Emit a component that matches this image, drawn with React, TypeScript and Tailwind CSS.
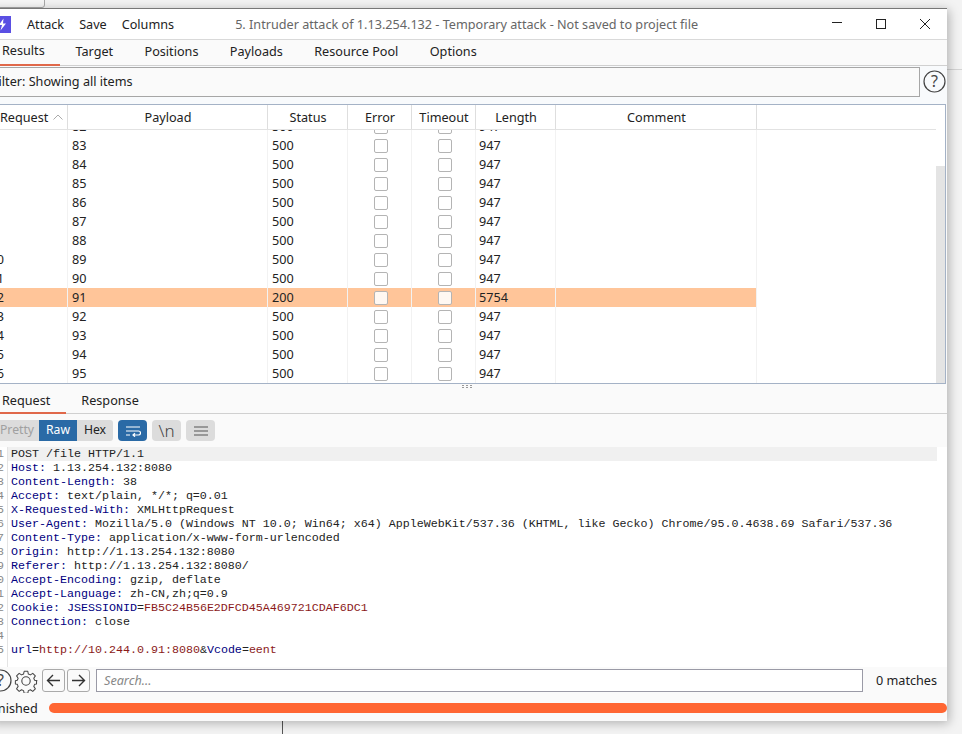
import React from "react";

const sans = { fontFamily: '"Noto Sans", "Open Sans", sans-serif' };
const rows = [82, 83, 84, 85, 86, 87, 88, 89, 90, 91, 92, 93, 94, 95];
const cols = [
  { label: "Payload", w: "w-[200px]" },
  { label: "Status", w: "w-[80px]" },
  { label: "Error", w: "w-[64px]" },
  { label: "Timeout", w: "w-[64px]" },
  { label: "Length", w: "w-[80px]" },
  { label: "Comment", w: "w-[201px]" },
];

function Box({ hit }: { hit: boolean }) {
  return <div className={`w-[14px] h-[14px] rounded-[2px] border border-[#b4b4b4] ${hit ? "bg-[#fff8f2]" : "bg-white"}`} />;
}

function Row({ n }: { n: number }) {
  const hit = n === 91;
  const req = n >= 89 ? String(n + 1) : "";
  return (
    <div className={`flex h-[19px] w-[768px] items-center text-[12.65px] text-[#222] ${hit ? "bg-[#ffc599]" : ""}`}>
      <div className="w-[79px] h-full flex items-center justify-end border-r border-[#f2f2f2] pr-[63px] shrink-0">{req}</div>
      <div className="w-[200px] h-full flex items-center pl-[4px] border-r border-[#f2f2f2] shrink-0">{n}</div>
      <div className="w-[80px] h-full flex items-center pl-[4px] border-r border-[#f2f2f2] shrink-0">{hit ? 200 : 500}</div>
      <div className="w-[64px] h-full flex items-center justify-center pl-[2px] border-r border-[#f2f2f2] shrink-0"><Box hit={hit} /></div>
      <div className="w-[64px] h-full flex items-center justify-center pl-[2px] border-r border-[#f2f2f2] shrink-0"><Box hit={hit} /></div>
      <div className="w-[80px] h-full flex items-center pl-[3px] border-r border-[#f2f2f2] shrink-0">{hit ? 5754 : 947}</div>
      <div className="w-[201px] h-full border-r border-[#f2f2f2] shrink-0" />
    </div>
  );
}

const N = "text-[#000080]";
const R = "text-[#8b1a1a]";
const K = "text-[#222]";
const code: React.ReactNode[] = [
  <span className={K}>POST /file HTTP/1.1</span>,
  <><span className={N}>Host:</span><span className={K}> 1.13.254.132:8080</span></>,
  <><span className={N}>Content-Length:</span><span className={K}> 38</span></>,
  <><span className={N}>Accept:</span><span className={K}> text/plain, */*; q=0.01</span></>,
  <><span className={N}>X-Requested-With:</span><span className={K}> XMLHttpRequest</span></>,
  <><span className={N}>User-Agent:</span><span className={K}> Mozilla/5.0 (Windows NT 10.0; Win64; x64) AppleWebKit/537.36 (KHTML, like Gecko) Chrome/95.0.4638.69 Safari/537.36</span></>,
  <><span className={N}>Content-Type:</span><span className={K}> application/x-www-form-urlencoded</span></>,
  <><span className={N}>Origin:</span><span className={K}> http://1.13.254.132:8080</span></>,
  <><span className={N}>Referer:</span><span className={K}> http://1.13.254.132:8080/</span></>,
  <><span className={N}>Accept-Encoding:</span><span className={K}> gzip, deflate</span></>,
  <><span className={N}>Accept-Language:</span><span className={K}> zh-CN,zh;q=0.9</span></>,
  <><span className={N}>Cookie:</span><span className={K}> </span><span className={N}>JSESSIONID</span><span className={K}>=</span><span className={R}>FB5C24B56E2DFCD45A469721CDAF6DC1</span></>,
  <><span className={N}>Connection:</span><span className={K}> close</span></>,
  <></>,
  <><span className={N}>url</span><span className={K}>=</span><span className={R}>http://10.244.0.91:8080</span><span className={K}>&amp;</span><span className={N}>Vcode</span><span className={K}>=</span><span className={R}>eent</span></>,
];

const Help = ({ className }: { className: string }) => (
  <svg className={className} width="23" height="23" viewBox="0 0 23 23">
    <circle cx="11.5" cy="11.5" r="10.5" fill="none" stroke="#444" strokeWidth="1.2" />
    <text x="11.5" y="17" textAnchor="middle" fontSize="16" fill="#444" fontFamily="Noto Sans">?</text>
  </svg>
);

export default function App() {
  return (
    <div className="relative w-[962px] h-[734px] overflow-hidden bg-[#f3f3f3]" style={sans}>
      {/* desktop behind the window */}
      <div className="absolute left-[-10px] top-[-6px] w-[55px] h-[14px] border border-[#a8a8a8] rounded-[3px] bg-[#f6f6f6]" />
      <div className="absolute left-[947px] top-[69px] w-[15px] h-px bg-[#d4d4d4]" />
      <div className="absolute left-[282px] top-[721px] w-px h-[13px] bg-[#555]" />

      {/* window */}
      <div className="absolute left-[-12px] top-[8px] w-[959px] h-[713px] flex flex-col bg-[#fafafa] border-t border-[#777] shadow-[2px_2px_10px_rgba(0,0,0,0.28)] text-[12.65px] text-[#222]">
        {/* title bar */}
        <div className="h-[31px] shrink-0 bg-white flex items-center border-b border-[#d9d9d9]">
          <div className="ml-[6px] w-[17px] h-[17px] bg-[#5a4fe3] flex items-center justify-center">
            <svg width="9" height="13" viewBox="0 0 9 13"><path d="M5.5 0.5 L1 7 H4 L2.5 12.5 L8 5.5 H5 Z" fill="#fff" /></svg>
          </div>
          <span className="ml-[16px]">Attack</span>
          <span className="ml-[15px]">Save</span>
          <span className="ml-[15px]">Columns</span>
          <span className="ml-[61px] text-[#666]">5. Intruder attack of 1.13.254.132 - Temporary attack - Not saved to project file</span>
          <div className="ml-auto flex items-center pr-[16px] gap-[32px]">
            <svg width="12" height="12" viewBox="0 0 12 12"><path d="M1 4.5H11" stroke="#222" strokeWidth="1" /></svg>
            <svg width="12" height="12" viewBox="0 0 12 12"><rect x="1.5" y="1.5" width="9" height="9" fill="none" stroke="#222" strokeWidth="1" /></svg>
            <svg width="12" height="12" viewBox="0 0 12 12"><path d="M1 1L11 11M11 1L1 11" stroke="#222" strokeWidth="1" /></svg>
          </div>
        </div>

        {/* main tabs */}
        <div className="h-[26px] shrink-0 flex border-b border-[#d0d0d0] bg-[#fafafa] ml-[-1px]">
          {["Results", "Target", "Positions", "Payloads", "Resource Pool", "Options"].map((t, i) => (
            <div key={t} className={`flex items-center pb-[3px] h-[26px] ${i === 0 ? "px-[15px] border-b-[2px] border-[#e0684a]" : "px-[15.7px]"}`}>{t}</div>
          ))}
        </div>

        {/* filter */}
        <div className="h-[38px] shrink-0 flex bg-[#f8fafc] pt-[1px]">
          <div className="w-[932px] h-[30px] border border-[#a6a6a6] bg-[#fafafa] flex items-center pl-[3px] pb-[1px]">Filter: Showing all items</div>
          <Help className="ml-[3px] mt-[3px]" />
        </div>

        {/* table */}
        <div className="h-[280px] shrink-0 w-[958px] border border-[#a4b2c6] bg-white flex overflow-hidden">
          <div className="w-[947px] shrink-0 flex flex-col">
            <div className="h-[25px] shrink-0 flex border-b border-[#e2e2e2]">
              <div className="w-[79px] shrink-0 flex items-center pl-[11px] gap-[5px] border-r border-[#dedede]">
                Request
                <svg width="10" height="6" viewBox="0 0 10 6"><path d="M0.5 5.5L5 1L9.5 5.5" fill="none" stroke="#aaa" strokeWidth="1" /></svg>
              </div>
              {cols.map((c) => (
                <div key={c.label} className={`${c.w} shrink-0 flex items-center justify-center pl-[1px] border-r border-[#dedede]`}>{c.label}</div>
              ))}
            </div>
            <div className="flex-1 overflow-hidden">
              <div className="mt-[-13px]">
                {rows.map((n) => <Row key={n} n={n} />)}
              </div>
            </div>
          </div>
          <div className="flex-1 flex flex-col">
            <div className="h-[61px] shrink-0" />
            <div className="flex-1 bg-[#e4e4e4]" />
          </div>
        </div>

        {/* lower tabs */}
        <div className="h-[30px] shrink-0 flex border-b border-[#d0d0d0] relative ml-[-2px]">
          <div className="pr-[16px] pl-[16px] pt-[7px] border-b-[2px] border-[#e0684a] h-[30px]">Request</div>
          <div className="pl-[15px] pt-[7px]">Response</div>
          <div className="absolute left-[476px] top-[1px] flex flex-col gap-px">
            <div className="flex gap-[2px]"><i className="w-[2px] h-[1px] bg-[#999]" /><i className="w-[2px] h-[1px] bg-[#999]" /><i className="w-[2px] h-[1px] bg-[#999]" /></div>
            <div className="flex gap-[2px]"><i className="w-[2px] h-[1px] bg-[#999]" /><i className="w-[2px] h-[1px] bg-[#999]" /><i className="w-[2px] h-[1px] bg-[#999]" /></div>
          </div>
        </div>

        {/* toolbar */}
        <div className="h-[33px] shrink-0 flex items-center">
          <div className="flex h-[21px] rounded-[3px] overflow-hidden bg-[#dcdcdc] text-[12.2px] w-[125px]">
            <div className="w-[51px] pl-[12px] flex items-center text-[#a0a0a0]">Pretty</div>
            <div className="w-[38px] flex items-center justify-center bg-[#2a6aa6] text-white">Raw</div>
            <div className="flex-1 flex items-center justify-center">Hex</div>
          </div>
          <div className="ml-[5px] w-[29px] h-[21px] rounded-[4px] bg-[#2a6aa6] flex items-center justify-center">
            <svg width="16" height="12" viewBox="0 0 16 12" fill="none" stroke="#fff" strokeWidth="1.2"><path d="M1 2H15M1 6H13.5a2 2 0 0 1 0 4H8.5M10 8.3L8 10L10 11.7M1 10H5" /></svg>
          </div>
          <div className="ml-[5px] w-[29px] h-[21px] rounded-[4px] bg-[#dcdcdc] flex items-center justify-center text-[17px] font-light text-[#444]">\n</div>
          <div className="ml-[5px] w-[29px] h-[21px] rounded-[4px] bg-[#dcdcdc] flex items-center justify-center">
            <svg width="14" height="10" viewBox="0 0 14 10" stroke="#555" strokeWidth="1.2"><path d="M0 1H14M0 5H14M0 9H14" /></svg>
          </div>
        </div>

        {/* code editor */}
        <div className="h-[220px] shrink-0 bg-white flex text-[11.67px] leading-[14px]" style={{ fontFamily: '"Liberation Mono", monospace' }}>
          <div className="w-[20px] shrink-0 text-right pr-[3px] border-r border-[#e4e4e4] text-[#888] whitespace-pre">
            {code.map((_, i) => <div key={i} className="h-[14px]">{i + 1}</div>)}
          </div>
          <div className="flex-1 min-w-0">
            {code.map((c, i) => (
              <div key={i} className={`h-[14px] w-[929px] pl-[3px] whitespace-pre ${i === 0 ? "bg-[#f0f0f0]" : ""}`}>{c}</div>
            ))}
          </div>
        </div>

        {/* search row */}
        <div className="h-[31px] shrink-0 flex items-center pb-[4px]">
          <Help className="ml-[1px]" />
          <svg className="ml-[2px]" width="24" height="24" viewBox="0 0 24 24" fill="none" stroke="#444" strokeWidth="1.1" strokeLinejoin="round">
            <path d="M10 1.5h4l.6 3 2.2.9 2.6-1.7 2.8 2.8-1.7 2.6.9 2.2 3 .6v0M10 1.5l-.6 3-2.2.9-2.6-1.7-2.8 2.8 1.7 2.6-.9 2.2-2.1.4v3.6l2.1.4.9 2.2-1.7 2.6 2.8 2.8 2.6-1.7 2.2.9.6 2.9h4l.6-2.9 2.2-.9 2.6 1.7 2.8-2.8-1.7-2.6.9-2.2 2.1-.4v-3.6l-2.1-.4" transform="scale(.92) translate(1 1)" />
            <circle cx="12" cy="12" r="4.2" />
          </svg>
          <div className="ml-[4px] w-[23px] h-[23px] border border-[#aaa] rounded-[3px] flex items-center justify-center">
            <svg width="15" height="13" viewBox="0 0 15 13" fill="none" stroke="#333" strokeWidth="1.4"><path d="M14 6.5H1.5M7 1L1.5 6.5L7 12" /></svg>
          </div>
          <div className="ml-[2px] w-[23px] h-[23px] border border-[#aaa] rounded-[3px] flex items-center justify-center">
            <svg width="15" height="13" viewBox="0 0 15 13" fill="none" stroke="#333" strokeWidth="1.4"><path d="M1 6.5H13.5M8 1L13.5 6.5L8 12" /></svg>
          </div>
          <div className="ml-[6px] w-[767px] h-[23px] border border-[#9a9aa6] bg-white flex items-center pl-[7px] italic text-[#888]">Search...</div>
          <span className="ml-[13px]">0 matches</span>
        </div>

        {/* status */}
        <div className="flex-1 flex items-start">
          <span className="w-[61px] mt-[1px]">Finished</span>
          <div className="w-[898px] h-[10px] mt-[5px] rounded-full bg-[#ff6633]" />
        </div>
      </div>
    </div>
  );
}
